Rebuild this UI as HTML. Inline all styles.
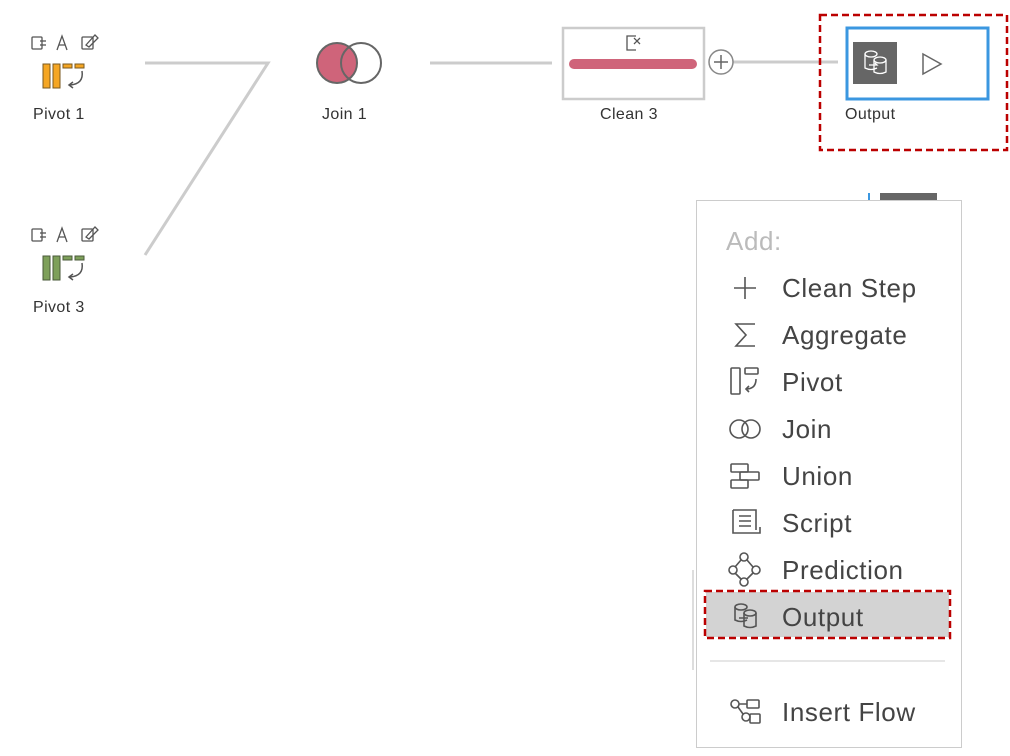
<!DOCTYPE html>
<html><head><style>
body{margin:0;width:1010px;height:756px;background:#fff;position:relative;overflow:hidden;font-family:"Liberation Sans",sans-serif}
.a{position:absolute}
.lbl{position:absolute;font-size:16px;color:#333;letter-spacing:0.4px}
.mi{position:absolute;left:782px;font-size:26px;color:#444;line-height:30px;letter-spacing:0.6px}
</style></head><body>
<svg class="a" style="left:0;top:0" width="1010" height="756">
<g stroke="#ccc" stroke-width="3" fill="none">
<polyline points="145,63 268,63 145,255"/>
<line x1="430" y1="63" x2="552" y2="63"/>
<line x1="733" y1="62" x2="838" y2="62"/>
</g>
<g stroke="#555" stroke-width="1.3" fill="none">
<rect x="32" y="37" width="10" height="12" rx="1"/><line x1="40" y1="41" x2="46" y2="41"/><line x1="40" y1="45" x2="46" y2="45"/>
<path d="M57 50 L62 36 L67 50 M59 45 H65"/>
<rect x="82" y="37" width="11" height="12" rx="1"/><path d="M86 45 L95 35 L98 38 L89 47 Z"/>
</g>
<rect x="43" y="64" width="7" height="24" fill="#f5a623" stroke="#7a5a20"/>
<rect x="53" y="64" width="7" height="24" fill="#f5a623" stroke="#7a5a20"/>
<rect x="63" y="64" width="9" height="4" fill="#f5a623" stroke="#7a5a20"/>
<rect x="75" y="64" width="9" height="4" fill="#f5a623" stroke="#7a5a20"/>
<path d="M82 71 Q84 84 70 85 M73 82 L69 85 L73 88" stroke="#555" stroke-width="1.5" fill="none"/>
<g transform="translate(0,192)" stroke="#555" stroke-width="1.3" fill="none">
<rect x="32" y="37" width="10" height="12" rx="1"/><line x1="40" y1="41" x2="46" y2="41"/><line x1="40" y1="45" x2="46" y2="45"/>
<path d="M57 50 L62 36 L67 50 M59 45 H65"/>
<rect x="82" y="37" width="11" height="12" rx="1"/><path d="M86 45 L95 35 L98 38 L89 47 Z"/>
</g>
<g transform="translate(0,192)">
<rect x="43" y="64" width="7" height="24" fill="#7ea05a" stroke="#4a5a3a"/>
<rect x="53" y="64" width="7" height="24" fill="#7ea05a" stroke="#4a5a3a"/>
<rect x="63" y="64" width="9" height="4" fill="#7ea05a" stroke="#4a5a3a"/>
<rect x="75" y="64" width="9" height="4" fill="#7ea05a" stroke="#4a5a3a"/>
<path d="M82 71 Q84 84 70 85 M73 82 L69 85 L73 88" stroke="#555" stroke-width="1.5" fill="none"/>
</g>
<circle cx="337" cy="63" r="20" fill="#cf647a" stroke="#666" stroke-width="2"/>
<circle cx="361" cy="63" r="20" fill="none" stroke="#666" stroke-width="2"/>
<rect x="563" y="28" width="141" height="71" fill="#fff" stroke="#ccc" stroke-width="2.5"/>
<rect x="569" y="59" width="128" height="10" rx="5" fill="#cf647a"/>
<path d="M636 36 H627 V50 H636 M634 38 L640 44 M640 38 L634 44" stroke="#555" stroke-width="1.3" fill="none"/>
<circle cx="721" cy="62" r="12" fill="#fff" stroke="#888" stroke-width="1.5"/>
<path d="M721 55 V69 M714 62 H728" stroke="#666" stroke-width="1.5"/>
<rect x="847" y="28" width="141" height="71" fill="#fff" stroke="#3b97e0" stroke-width="3"/>
<rect x="853" y="42" width="44" height="42" fill="#666"/>
<g stroke="#fff" stroke-width="1.3" fill="none"><ellipse cx="871" cy="54" rx="6" ry="3"/><path d="M865 54 V68 Q871 71 877 68"/><ellipse cx="880" cy="60" rx="6" ry="3"/><path d="M874 60 V72 Q880 75 886 72 V60 M869 65 H877 L875 63"/></g>
<path d="M923 54 L941 64 L923 74 Z" fill="none" stroke="#666" stroke-width="1.5"/>
<rect x="820" y="15" width="187" height="135" fill="none" stroke="#b00" stroke-width="2.5" stroke-dasharray="7,4"/>
<rect x="868" y="193" width="2" height="8" fill="#3b97e0"/><rect x="880" y="193" width="57" height="8" fill="#666"/>
<rect x="696.5" y="200.5" width="265" height="547" fill="#fff" stroke="#ccc"/>
<rect x="692" y="570" width="2" height="100" fill="#ddd"/>
<rect x="706" y="592" width="243" height="45" fill="#d3d3d3"/>
<rect x="705" y="591" width="245" height="47" fill="none" stroke="#b00" stroke-width="2.5" stroke-dasharray="7,4"/>
<line x1="710" y1="661" x2="945" y2="661" stroke="#ddd" stroke-width="1.5"/>
<g stroke="#555" stroke-width="1.6" fill="none">
<path d="M745 277 V299 M734 288 H756"/>
<path d="M755 324 H736 L746 335 L736 346 H755"/>
<rect x="731" y="368" width="9" height="26" rx="1"/><rect x="745" y="368" width="13" height="6" rx="1"/><path d="M756 379 Q756 389 746 389 M749 386 L746 389 L749 392"/>
<circle cx="739" cy="429" r="9"/><circle cx="751" cy="429" r="9"/>
<rect x="731" y="464" width="17" height="8" rx="1"/><rect x="740" y="472" width="19" height="8" rx="1"/><rect x="731" y="480" width="17" height="8" rx="1"/>
<path d="M733 510 H756 V530 M733 510 V533 H760 V527 M739 516 H751 M739 521 H751 M739 526 H751"/>
<circle cx="744" cy="557" r="4"/><circle cx="733" cy="570" r="4"/><circle cx="756" cy="570" r="4"/><circle cx="744" cy="582" r="4"/><path d="M741 560 L735 567 M747 560 L753 567 M735 573 L741 579 M753 573 L747 579"/>
<ellipse cx="741" cy="607" rx="6" ry="3"/><path d="M735 607 V620 Q741 623 747 620"/><ellipse cx="750" cy="613" rx="6" ry="3"/><path d="M744 613 V626 Q750 629 756 626 V613 M739 618 H748"/>
<circle cx="735" cy="704" r="4"/><circle cx="746" cy="717" r="4"/><path d="M738 707 L743 714 M739 704 H747"/><rect x="747" y="700" width="12" height="8" rx="1"/><rect x="750" y="714" width="10" height="9" rx="1"/>
</g>
</svg>
<div class="lbl" style="left:33px;top:106px">Pivot 1</div>
<div class="lbl" style="left:33px;top:299px">Pivot 3</div>
<div class="lbl" style="left:322px;top:106px">Join 1</div>
<div class="lbl" style="left:600px;top:106px">Clean 3</div>
<div class="lbl" style="left:845px;top:106px">Output</div>
<div class="mi" style="left:726px;top:226px;color:#bbb">Add:</div>
<div class="mi" style="top:273px">Clean Step</div>
<div class="mi" style="top:320px">Aggregate</div>
<div class="mi" style="top:367px">Pivot</div>
<div class="mi" style="top:414px">Join</div>
<div class="mi" style="top:461px">Union</div>
<div class="mi" style="top:508px">Script</div>
<div class="mi" style="top:555px">Prediction</div>
<div class="mi" style="top:602px">Output</div>
<div class="mi" style="top:697px">Insert Flow</div>
</body></html>
